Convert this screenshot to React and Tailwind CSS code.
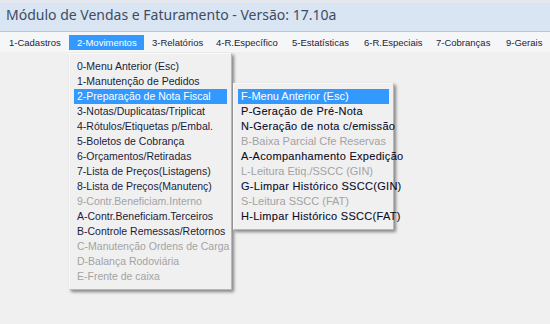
const topMenu = [
  { label: "1-Cadastros", w: "w-[68px]" },
  { label: "2-Movimentos", w: "w-[75px]", active: true },
  { label: "3-Relatórios", w: "w-[64px]" },
  { label: "4-R.Específico", w: "w-[76px]" },
  { label: "5-Estatísticas", w: "w-[72px]" },
  { label: "6-R.Especiais", w: "w-[72px]" },
  { label: "7-Cobranças", w: "w-[70px]" },
  { label: "9-Gerais", w: "w-[50px]" },
];

const movimentos = [
  { label: "0-Menu Anterior (Esc)" },
  { label: "1-Manutenção de Pedidos" },
  { label: "2-Preparação de Nota Fiscal", active: true },
  { label: "3-Notas/Duplicatas/Triplicat" },
  { label: "4-Rótulos/Etiquetas p/Embal." },
  { label: "5-Boletos de Cobrança" },
  { label: "6-Orçamentos/Retiradas" },
  { label: "7-Lista de Preços(Listagens)" },
  { label: "8-Lista de Preços(Manutenç)" },
  { label: "9-Contr.Beneficiam.Interno", disabled: true },
  { label: "A-Contr.Beneficiam.Terceiros" },
  { label: "B-Controle Remessas/Retornos" },
  { label: "C-Manutenção Ordens de Carga", disabled: true },
  { label: "D-Balança Rodoviária", disabled: true },
  { label: "E-Frente de caixa", disabled: true },
];

// enabled entries of this submenu are drawn a little heavier
const notaFiscal = [
  { label: "F-Menu Anterior (Esc)", active: true },
  { label: "P-Geração de Pré-Nota", strong: true },
  { label: "N-Geração de nota c/emissão", strong: true },
  { label: "B-Baixa Parcial Cfe Reservas", disabled: true },
  { label: "A-Acompanhamento Expedição", strong: true },
  { label: "L-Leitura Etiq./SSCC (GIN)", disabled: true },
  { label: "G-Limpar Histórico SSCC(GIN)", strong: true },
  { label: "S-Leitura SSCC (FAT)", disabled: true },
  { label: "H-Limpar Histórico SSCC(FAT)", strong: true },
];

function MenuItem({ item }) {
  const color = item.active
    ? "bg-[#3399ff] text-white"
    : item.disabled
    ? "text-[#a3a3a3]"
    : item.strong
    ? "text-[#0c0c26]"
    : "text-[#1c1c3a]";
  return (
    <div
      className={`h-[15px] pl-[3px] leading-[15px] whitespace-nowrap ${color} ${
        item.strong ? "tracking-[0.3px] [-webkit-text-stroke:0.1px_#0c0c26]" : ""
      }`}
    >
      {item.label}
    </div>
  );
}

function Dropdown({ items, className }) {
  return (
    <div
      className={`absolute border border-[#f8f8f8] border-r-[#b8b8b8] border-b-[#b8b8b8] bg-[#f0f0f0] py-[5px] px-[4px] shadow-[2px_2px_3px_rgba(0,0,0,0.45)] ${className}`}
    >
      {items.map((item) => (
        <MenuItem key={item.label} item={item} />
      ))}
    </div>
  );
}

export default function App() {
  return (
    <div className="relative h-[324px] w-[550px] overflow-hidden bg-[#f0f0f0] font-['Liberation_Sans',Arial,sans-serif]">
      <div className="h-[32px] border-t-[3px] border-[#e4e8ee] border-b border-b-[#b9c6d6] bg-[#dae5f3] pl-[6px] text-[14px] leading-[24px] text-[#3c4c63] font-['Noto_Sans',sans-serif]">
        Módulo de Vendas e Faturamento - Versão: 17.10a
      </div>
      <div className="flex h-[20px] items-center bg-[#f5f6f7] pl-[1px] text-[9.5px]">
        {topMenu.map((item) => (
          <div
            key={item.label}
            className={`h-[15px] pl-[8px] leading-[15px] whitespace-nowrap ${item.w} ${
              item.active ? "bg-[#3399ff] text-white" : "text-[#1c1c3a]"
            }`}
          >
            {item.label}
          </div>
        ))}
      </div>

      <Dropdown items={movimentos} className="left-[69px] top-[53px] w-[163px] text-[10.5px]" />
      <Dropdown items={notaFiscal} className="left-[233px] top-[83px] w-[161px] text-[11px]" />
    </div>
  );
}
